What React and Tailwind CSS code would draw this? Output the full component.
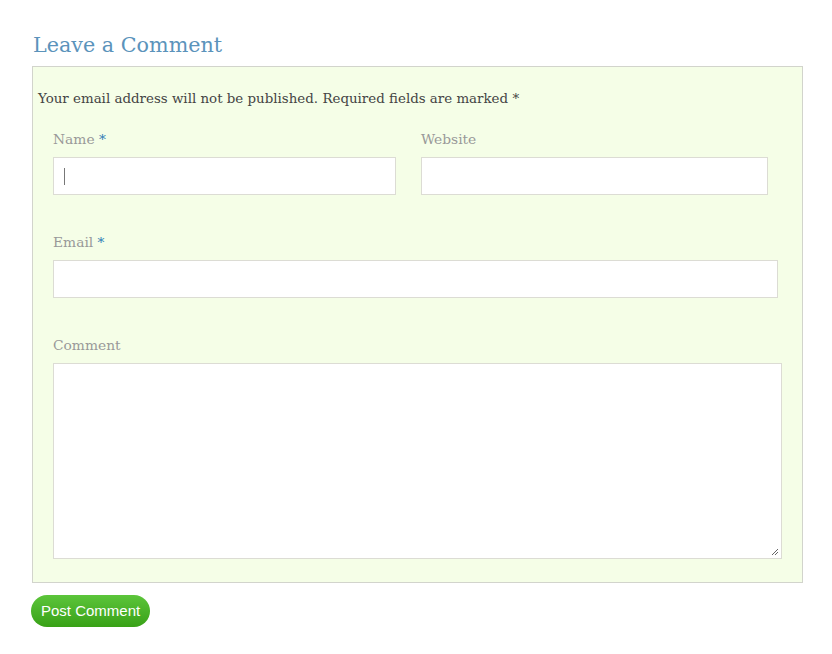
export default function App() {
  return (
    <div className="min-h-screen bg-white font-['DejaVu_Serif',serif] text-[#444]">
      <div className="pl-[32px] pt-[30px] w-[803px]">
        <h3 className="text-[20.7px] leading-[30px] text-[#5b93bb] pl-px">Leave a Comment</h3>

        <form className="mt-[6px] border border-[#d2d4cc] bg-[#f5fee7] pb-[23px]">
          <p className="pl-[5px] pt-[22px] text-[13.4px] leading-[20px]">
            Your email address will not be published. Required fields are marked <span>*</span>
          </p>

          <div className="flex gap-[25px] pl-[20px] mt-[20px]">
            <Field label="Name" required width="w-[343px]" caret />
            <Field label="Website" width="w-[347px]" />
          </div>

          <div className="pl-[20px] mt-[37px]">
            <Field label="Email" required width="w-[725px]" />
          </div>

          <div className="pl-[20px] mt-[37px]">
            <label className="block text-[13.8px] leading-[20px] text-[#999]">Comment</label>
            <div className="relative mt-[8px] w-[729px] h-[196px] border border-[#dcdcd4] bg-white">
              <svg className="absolute right-[2px] bottom-[2px]" width="8" height="8" viewBox="0 0 8 8">
                <path d="M7 1 L1 7 M7 4 L4 7" stroke="#666" strokeWidth="1" />
              </svg>
            </div>
          </div>
        </form>

        <button className="mt-[12px] -ml-px h-[32px] px-[10px] rounded-full bg-gradient-to-b from-[#5cc53a] to-[#38a116] text-white font-['Liberation_Sans',sans-serif] text-[15px] leading-[32px]">
          Post Comment
        </button>
      </div>
    </div>
  )
}

function Field({ label, required, width, caret }) {
  return (
    <div>
      <label className="block text-[13.8px] leading-[20px] text-[#999]">
        {label} {required && <span className="text-[#2f7db5]">*</span>}
      </label>
      <div className={`relative mt-[8px] h-[38px] border border-[#dcdcd4] bg-white ${width}`}>
        {caret && <div className="absolute left-[10px] top-[10px] w-px h-[17px] bg-[#777]" />}
      </div>
    </div>
  )
}
